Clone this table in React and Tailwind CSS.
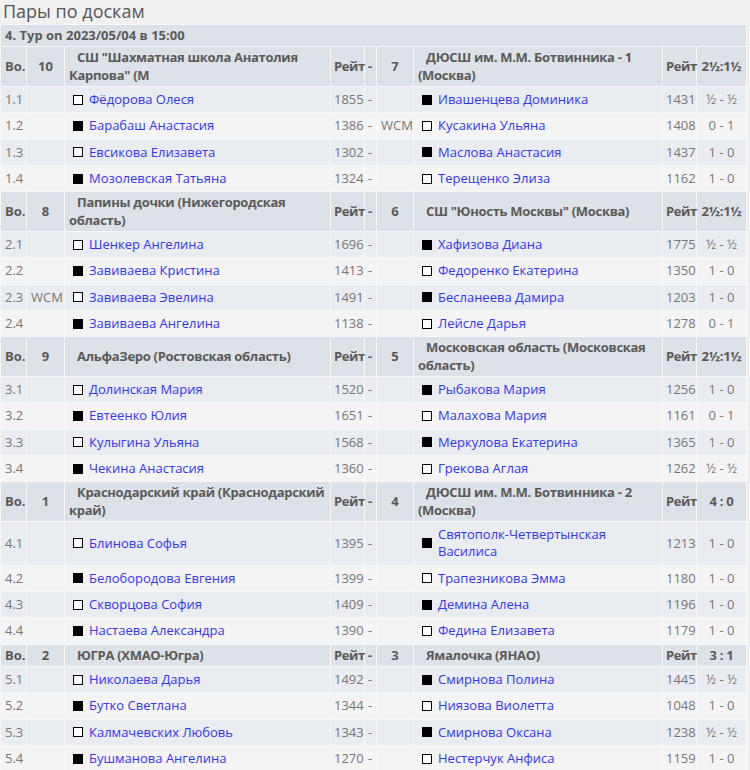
import React from 'react';

const boards = [
  {
    left: { no: '10', team: 'СШ "Шахматная школа Анатолия Карпова" (М' },
    right: { no: '7', team: 'ДЮСШ им. М.М. Ботвинника - 1 (Москва)' },
    score: '2½:1½',
    games: [
      ['1.1', '', 'w', 'Фёдорова Олеся', '1855', '', 'b', 'Ивашенцева Доминика', '1431', '½ - ½'],
      ['1.2', '', 'b', 'Барабаш Анастасия', '1386', 'WCM', 'w', 'Кусакина Ульяна', '1408', '0 - 1'],
      ['1.3', '', 'w', 'Евсикова Елизавета', '1302', '', 'b', 'Маслова Анастасия', '1437', '1 - 0'],
      ['1.4', '', 'b', 'Мозолевская Татьяна', '1324', '', 'w', 'Терещенко Элиза', '1162', '1 - 0'],
    ],
  },
  {
    left: { no: '8', team: 'Папины дочки (Нижегородская область)' },
    right: { no: '6', team: 'СШ "Юность Москвы" (Москва)' },
    score: '2½:1½',
    games: [
      ['2.1', '', 'w', 'Шенкер Ангелина', '1696', '', 'b', 'Хафизова Диана', '1775', '½ - ½'],
      ['2.2', '', 'b', 'Завиваева Кристина', '1413', '', 'w', 'Федоренко Екатерина', '1350', '1 - 0'],
      ['2.3', 'WCM', 'w', 'Завиваева Эвелина', '1491', '', 'b', 'Бесланеева Дамира', '1203', '1 - 0'],
      ['2.4', '', 'b', 'Завиваева Ангелина', '1138', '', 'w', 'Лейсле Дарья', '1278', '0 - 1'],
    ],
  },
  {
    left: { no: '9', team: 'АльфаЗеро (Ростовская область)' },
    right: { no: '5', team: 'Московская область (Московская область)' },
    score: '2½:1½',
    games: [
      ['3.1', '', 'w', 'Долинская Мария', '1520', '', 'b', 'Рыбакова Мария', '1256', '1 - 0'],
      ['3.2', '', 'b', 'Евтеенко Юлия', '1651', '', 'w', 'Малахова Мария', '1161', '0 - 1'],
      ['3.3', '', 'w', 'Кулыгина Ульяна', '1568', '', 'b', 'Меркулова Екатерина', '1365', '1 - 0'],
      ['3.4', '', 'b', 'Чекина Анастасия', '1360', '', 'w', 'Грекова Аглая', '1262', '½ - ½'],
    ],
  },
  {
    left: { no: '1', team: 'Краснодарский край (Краснодарский край)' },
    right: { no: '4', team: 'ДЮСШ им. М.М. Ботвинника - 2 (Москва)' },
    score: '4 : 0',
    games: [
      ['4.1', '', 'w', 'Блинова Софья', '1395', '', 'b', 'Святополк-Четвертынская Василиса', '1213', '1 - 0'],
      ['4.2', '', 'b', 'Белобородова Евгения', '1399', '', 'w', 'Трапезникова Эмма', '1180', '1 - 0'],
      ['4.3', '', 'w', 'Скворцова София', '1409', '', 'b', 'Демина Алена', '1196', '1 - 0'],
      ['4.4', '', 'b', 'Настаева Александра', '1390', '', 'w', 'Федина Елизавета', '1179', '1 - 0'],
    ],
  },
  {
    left: { no: '2', team: 'ЮГРА (ХМАО-Югра)' },
    right: { no: '3', team: 'Ямалочка (ЯНАО)' },
    score: '3 : 1',
    games: [
      ['5.1', '', 'w', 'Николаева Дарья', '1492', '', 'b', 'Смирнова Полина', '1445', '½ - ½'],
      ['5.2', '', 'b', 'Бутко Светлана', '1344', '', 'w', 'Ниязова Виолетта', '1048', '1 - 0'],
      ['5.3', '', 'w', 'Калмачевских Любовь', '1343', '', 'b', 'Смирнова Оксана', '1238', '½ - ½'],
      ['5.4', '', 'b', 'Бушманова Ангелина', '1270', '', 'w', 'Нестерчук Анфиса', '1159', '1 - 0'],
    ],
  },
];

const Player = ({ color, name }) => (
  <div className="flex items-center pl-1">
    <span
      className={`shrink-0 w-[10px] h-[10px] border border-black ${
        color === 'b' ? 'bg-black' : 'bg-white'
      }`}
    />
    <span className="pl-[6px] text-[#3535ee]">{name}</span>
  </div>
);

const App = () => {
  return (
    <div
      className="min-h-[770px] bg-[#f0f0f0] text-[13px] leading-[17.33px] text-[#5a5a5a]"
      style={{ fontFamily: '"Open Sans", "Noto Sans", sans-serif' }}
    >
      <div className="h-[25px] pl-[3px] text-[18px] leading-[22px] text-[#555]">Пары по доскам</div>

      <table className="table-fixed border-separate border-spacing-[1px] w-[747px] -mt-px bg-[#f7f7f7]">
        <colgroup>
          <col className="w-[25px]" />
          <col className="w-[37px]" />
          <col className="w-[265px]" />
          <col className="w-[33px]" />
          <col className="w-[11px]" />
          <col className="w-[36px]" />
          <col className="w-[248px]" />
          <col className="w-[33px]" />
          <col className="w-[49px]" />
        </colgroup>
        <tbody>
          <tr className="bg-[#dde1e8] font-bold">
            <td colSpan={9} className="px-1 py-[2px]">4. Тур on 2023/05/04 в 15:00</td>
          </tr>

          {boards.map((b) => (
            <React.Fragment key={b.left.no}>
              {/* team header */}
              <tr className="bg-[#dde1e8] font-bold align-middle">
                <td className="px-1 py-[2px]">Bo.</td>
                <td className="py-[2px] text-center">{b.left.no}</td>
                <td className="pl-1 pr-[2px] py-[2px] indent-2 tracking-[-0.3px]">{b.left.team}</td>
                <td className="pl-[3px] pr-0 py-[2px] tracking-[-0.4px]">Рейт</td>
                <td className="px-[3px] py-[2px]">-</td>
                <td className="py-[2px] text-center">{b.right.no}</td>
                <td className="pl-1 pr-[2px] py-[2px] indent-2 tracking-[-0.3px]">{b.right.team}</td>
                <td className="pl-[3px] pr-0 py-[2px] tracking-[-0.4px]">Рейт</td>
                <td className="py-[2px] text-center whitespace-nowrap tracking-[-0.3px]">{b.score}</td>
              </tr>

              {b.games.map((g, i) => (
                <tr key={g[0]} className={i % 2 === 0 ? 'bg-[#e9ecf0]' : 'bg-[#f4f4f4]'}>
                  <td className="px-1 py-1 text-[#777]">{g[0]}</td>
                  <td className="px-1 py-1 text-[#777]">{g[1]}</td>
                  <td className="px-1 py-1"><Player color={g[2]} name={g[3]} /></td>
                  <td className="px-[3px] py-1 text-[#777]">{g[4]}</td>
                  <td className="px-[3px] py-1 text-[#777]">-</td>
                  <td className="px-1 py-1 text-[#777]">{g[5]}</td>
                  <td className="px-1 py-1"><Player color={g[6]} name={g[7]} /></td>
                  <td className="px-[3px] py-1 text-[#777]">{g[8]}</td>
                  <td className="py-1 text-center text-[#777] whitespace-nowrap">{g[9]}</td>
                </tr>
              ))}
            </React.Fragment>
          ))}
        </tbody>
      </table>
    </div>
  );
};

export default App;
